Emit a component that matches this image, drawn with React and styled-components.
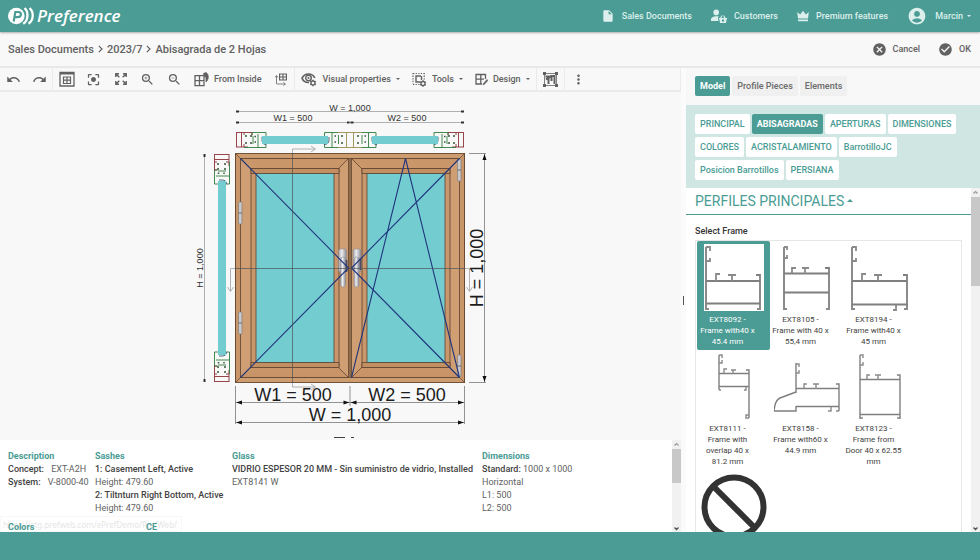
import { useState } from 'react'
import styled, { createGlobalStyle } from 'styled-components'
import {
  MdUndo,
  MdRedo,
  MdCenterFocusStrong,
  MdZoomIn,
  MdZoomOut,
  MdInsertDriveFile,
  MdAccountCircle,
  MdCancel,
  MdCheckCircle,
  MdMoreVert,
} from 'react-icons/md'

const GlobalStyle = createGlobalStyle`
  * {
    box-sizing: border-box;
  }
  body {
    margin: 0;
    font-family: Roboto, 'Liberation Sans', sans-serif;
    font-size: 9px;
    color: #616161;
  }
  button {
    font: inherit;
    color: inherit;
    border: 0;
    background: none;
    padding: 0;
    cursor: pointer;
  }
  a {
    color: inherit;
    text-decoration: none;
  }
  svg {
    display: block;
    flex: none;
  }
`

/* icons */
const CustomersIcon = () => (
  <svg width='16' height='14' viewBox='0 0 16 14' fill='currentColor'>
    <circle cx='5.2' cy='3.4' r='2.8' />
    <path d='M0 12V10.4C0 8.3 2.8 7.2 5.5 7.2c.8 0 1.600.1 2.300.3L7 9.200 7.500 12z' />
    <path d='M8 9h1l1.600-2.700.9.500L10.300 9h3l-1.200-2.200.9-.5L14.600 9H16v1.200h-.4L15 14H9l-.6-3.800H8zM12 10.300a1.200 1.200 0 1 0 .01 0z' fillRule='evenodd' />
  </svg>
)

const CrownIcon = () => (
  <svg width='12' height='12' viewBox='0 0 12 12' fill='currentColor'>
    <path d='M1 8.500.2 2l3 2.500L6 .8l2.800 3.700 3-2.500L11 8.500zM1 9.600h10v1.600H1z' />
  </svg>
)

const Chevron = () => (
  <svg width='5' height='8' viewBox='0 0 5 8' fill='none' stroke='currentColor' strokeWidth='1.200' aria-hidden='true'>
    <path d='m.8.8 3.200 3.200L.8 7.200' />
  </svg>
)

const WindowIcon = () => (
  <svg width='16' height='16' viewBox='0 0 16 16' fill='none' stroke='currentColor'>
    <path d='M1 1.500h14v13.500H1z' strokeWidth='1.300' />
    <path d='M1 2.500h14' strokeWidth='2' />
    <path d='M4.500 6h7v6.500h-7zM8 6v6.500M4.500 9.200h7' strokeWidth='1.200' />
  </svg>
)

const ExpandIcon = () => (
  <svg width='12' height='12' viewBox='0 0 12 12' fill='none' stroke='currentColor' strokeWidth='1.400'>
    <path d='M.8 4V.8H4M8 .8h3.200V4M11.200 8v3.200H8M4 11.200H.8V8M1 1l3.300 3.300M11 1 7.700 4.300M11 11 7.700 7.700M1 11l3.300-3.300' />
  </svg>
)

const InsideIcon = () => (
  <svg width='15' height='15' viewBox='0 0 15 15' fill='none' stroke='currentColor' strokeWidth='1.300'>
    <path d='M9.500 3.700H1v10h9v-4M5.500 3.700v10M1 8.700h9' />
    <path d='M9.500 1.500 12 .6c3 1.500 3 7 0 9.400V5.500L9.800 3.800z' fill='currentColor' strokeWidth='.8' />
    <path d='M10 3.500v6' />
  </svg>
)

const AxisIcon = () => (
  <svg width='12' height='13' viewBox='0 0 12 13' fill='none' stroke='currentColor'>
    <path d='M4.600 1h6.800v6H4.600zM8 1v6M4.600 4h6.800' strokeWidth='1.200' />
    <path d='M1.500 11V3M0 4.500 1.500 2.500 3 4.500M2 11h8M8.500 9.500l2 1.500-2 1.500' strokeWidth='.8' />
  </svg>
)

const Gear = ({ x, y }) => (
  <g transform={`translate(${x} ${y})`}>
    <circle r='2' fill='none' stroke='currentColor' strokeWidth='1.300' />
    <path
      d='M0-3.200V-2M0 2v1.200M-2.800-1.600l1 .6M1.800 1l1 .6M-2.800 1.600l1-.6M1.800-1l1-.6'
      stroke='currentColor'
      strokeWidth='1.300'
    />
  </g>
)

const EyeGearIcon = () => (
  <svg width='16' height='15' viewBox='0 0 16 15' fill='none' stroke='currentColor'>
    <path d='M8 10.500C4.500 10.700 2 8.800 1 6.300 2.200 3.500 4.500 2 7.500 2s5.200 1.500 6.300 4' strokeWidth='1.700' />
    <circle cx='7.500' cy='6' r='2.800' strokeWidth='1.400' />
    <circle cx='7.500' cy='6' r='1' fill='currentColor' stroke='none' />
    <Gear x={12} y={11} />
  </svg>
)

const ToolsIcon = () => (
  <svg width='15' height='15' viewBox='0 0 15 15' fill='none' stroke='currentColor'>
    <path d='M1 1.500h11M1 1v11M1 12.500h7M12.200 1v7' strokeWidth='1.200' strokeDasharray='1.300 1.300' />
    <path d='M9 4H4v6h4.500M9.500 4v4' strokeWidth='1.400' />
    <Gear x={11} y={11.500} />
  </svg>
)

const DesignIcon = () => (
  <svg width='13' height='13' viewBox='0 0 13 13' fill='none' stroke='currentColor' strokeWidth='1.300'>
    <path d='M7 11H1V1.500h9.500V6M5.800 1.500V11M1 6.200h8' />
    <path d='m8 12 .4-1.600 3.600-4 1 1-3.700 4z' fill='currentColor' strokeWidth='.5' />
  </svg>
)

const SelectIcon = () => (
  <svg width='15' height='15' viewBox='0 0 15 15' fill='none' stroke='currentColor'>
    <path d='M1.500 1.500h12v12h-12z' strokeWidth='.8' />
    <path d='M0 0h3v3H0zM12 0h3v3h-3zM0 12h3v3H0zM12 12h3v3h-3z' fill='currentColor' stroke='none' />
    <path d='M2.500 4.500h3v3M3 7.500l3-2.500M5.500 12V6.500M5.500 6l2.500-2h3.500v8M8.500 5v4' strokeWidth='2' />
  </svg>
)

const Logo = () => (
  <LogoLink href='#home' aria-label='Preference'>
    <svg width='27' height='18' viewBox='0 0 27 18'>
      <circle cx='8.300' cy='9' r='8.300' fill='#fff' />
      <path
        d='M5.700 14.500 7.300 5h3.200c3.600 0 3 5.200-.8 5.200H7.500'
        fill='none'
        stroke='#4a9c94'
        strokeWidth='2.200'
      />
      <path d='M16.500 1.200c4.200 3.200 4 12.400-1.300 15.600M21.500 1.200c4.600 3.600 4.300 12-1 15.600' fill='none' stroke='#fff' strokeWidth='2.300' />
    </svg>
    <span>Preference</span>
  </LogoLink>
)

/* the same corner section is reused on every side of the plan views */
const SectionEnd = ({ transform }) => (
  <g transform={transform} fill='none' strokeWidth='.9'>
    <path d='M0 .5h8M0 15h8M.5 1v14M5.500.5v14.500' stroke='#8b2f36' />
    <path d='M8 .5h8v3M8 15h4M8 1v2M8 12v3' stroke='#8b2f36' />
    <path d='M8 15.500h15M16 3V.5h14v4l-2 1M17 4v8M22 2v13.500M30 12v3.500h-8' stroke='#2f7d3c' />
    <path d='M26 5v3c0 3 1.500 4.500 4 4.500' stroke='#33566a' />
    <path d='M9 4h2M9 11h2M14 4h2M14 11h2M18.500 4.500H20M18.500 10H20' stroke='#35573a' strokeWidth='1.500' />
  </g>
)

const CentreSection = () => (
  <g transform='translate(324 132)' fill='none' strokeWidth='.9'>
    <path d='M14 .5h24M14 15.500h24M22.500.5v15M29.500.5v15' stroke='#9a8f4f' />
    <path d='M14 .5H.5V4l2 1M.5 12v3.500H14M14.500 3v9M8 .5v15M38 .5h14V4l-2 1M52 12v3.500H38M38 3v9M44.500.5v15' stroke='#2f7d3c' />
    <path d='M5 5v3c0 3-2 4.500-5 4.500M48 5v3c0 3 2 4.500 5 4.500' stroke='#33566a' />
    <path d='M10.500 4H12M10.500 10H12M40.500 4H42M40.500 10H42M17 4h2M17 11h2M33 4h2M33 11h2' stroke='#35573a' strokeWidth='1.500' />
  </g>
)

const Hinge = ({ x, y }) => (
  <g transform={`translate(${x} ${y})`}>
    <rect width='3.500' height='22' rx='1' fill='#c9c9cc' stroke='#77777c' strokeWidth='.6' />
    <path d='M0 11h3.500' stroke='#555' strokeWidth='.8' />
  </g>
)

const Sash = ({ x }) => (
  <g transform={`translate(${x} 0)`} stroke='#5e4330' strokeWidth='.8'>
    <rect x='0' y='158.500' width='108' height='219' fill='#cf9f73' />
    <path d='M0 158.500h108l-10 10H10zM0 377.500h108l-10-10H10z' fill='url(#woodH)' />
    <rect x='10.500' y='168.500' width='88' height='199' fill='#c9976b' />
    <path d='M10.500 168.500h88v5h-88zM10.500 362.500h88v5h-88z' fill='#c28f62' />
    <rect x='15.500' y='173.500' width='78' height='189' fill='#73cdd0' />
  </g>
)

const WindowDrawing = () => (
  <Canvas viewBox='0 92 681 348' preserveAspectRatio='xMidYMin slice' role='img' aria-label='Window with two sashes'>
    <defs>
      <linearGradient id='woodH' x1='0' y1='0' x2='0' y2='1'>
        <stop offset='0' stopColor='#c99669' />
        <stop offset='.6' stopColor='#d4a679' />
        <stop offset='1' stopColor='#c89467' />
      </linearGradient>
      <linearGradient id='handle' x1='0' x2='1'>
        <stop offset='0' stopColor='#a0a0a8' />
        <stop offset='.4' stopColor='#eeeef0' />
        <stop offset='1' stopColor='#8c8c96' />
      </linearGradient>
    </defs>

    {/* small dimensions */}
    <g stroke='#b0b0b0' strokeWidth='1'>
      <path d='M236 111.500h228M236 122.500h228M204.500 154v228' />
    </g>
    <g fill='#333'>
      <path d='M236 110.500h3v2h-3zM461 110.500h3v2h-3zM236 121.500h3v2h-3zM461 121.500h3v2h-3zM347 121.500h2.500v2H347zM350.500 121.500h3v2h-3zM203.500 154h2v3h-2zM203.500 379h2v3h-2z' />
    </g>
    <g fontFamily='Liberation Sans, sans-serif' fontSize='9' fill='#333' textAnchor='middle'>
      <text x='350' y='111'>W = 1,000</text>
      <text x='293' y='121'>W1 = 500</text>
      <text x='407' y='121'>W2 = 500</text>
      <text transform='translate(203 268) rotate(-90)'>H = 1,000</text>
    </g>

    {/* horizontal and vertical sections */}
    <SectionEnd transform='translate(236 132)' />
    <SectionEnd transform='translate(464 132) scale(-1 1)' />
    <CentreSection />
    <SectionEnd transform='matrix(0 1 1 0 214 154)' />
    <SectionEnd transform='matrix(0 -1 1 0 214 382)' />
    <path d='M262 136h66v8h-66zM372 136h66v8h-66zM218 181h8v174h-8z' fill='#73cdd0' />

    {/* window */}
    <rect x='235.500' y='153.500' width='229' height='229' fill='#c89668' stroke='#6b4a33' />
    <path d='M235.500 153.500h229l-5 5h-219zM235.500 382.500h229l-5-5h-219z' fill='#cd9c6f' stroke='#5e4330' strokeWidth='.7' />
    <Sash x={240.500} />
    <Sash x={351.500} />
    <path d='M350 158.500v219' stroke='#5e4330' />
    <Hinge x={238.500} y={202} />
    <Hinge x={238.500} y={312} />
    <Hinge x={457.500} y={159} />
    <Hinge x={457.500} y={355} />
    <g stroke='#85858d' strokeWidth='.5'>
      <rect x='338.500' y='249' width='8' height='23' rx='2' fill='url(#handle)' />
      <rect x='340.500' y='257' width='5' height='30' rx='2.500' fill='url(#handle)' />
      <rect x='353' y='249' width='8' height='23' rx='2' fill='url(#handle)' />
      <rect x='354' y='257' width='5' height='30' rx='2.500' fill='url(#handle)' />
      <path d='M346.500 260v12M360.500 258v12' stroke='#4b4b62' strokeWidth='1.800' />
    </g>
    <path
      d='M240.500 158.500 348.500 268l-108 109.500M459.500 158.500 351.500 268l108 109.500M405.500 158.500l-54 219M405.500 158.500l54 219'
      fill='none'
      stroke='#21357d'
      strokeWidth='1.100'
    />
    <g fill='none' stroke='#4c5357' strokeWidth='.7'>
      <path d='M292.500 153v230M235 268.500h230' />
    </g>
    <g fill='none' stroke='#a9a9a9' strokeWidth='.9'>
      <path d='M292.500 153v-4H315m-4-3 4.500 3-4.500 3M292.500 383v4H315m-4-3 4.500 3-4.500 3M235 268.500h-4.500V291m-3-4 3 4.500 3-4.500M465 268.500h4.500V291m-3-4 3 4.500 3-4.500' />
    </g>

    {/* large dimensions */}
    <g stroke='#777' strokeWidth='.8'>
      <path d='M235.500 386v38M464.500 386v38M350 386v20M469 153.500h17M469 382.500h17M236 402.500h228M236 422.500h228M484.500 154v228' />
    </g>
    <path
      d='M236 402.500l6-2v4zM349.500 402.500l-6-2v4zM350.500 402.500l6-2v4zM464 402.500l-6-2v4zM236 422.500l6-2v4zM464 422.500l-6-2v4zM484.500 154l-2 6h4zM484.500 382l-2-6h4z'
      fill='#111'
    />
    <g fontFamily='Liberation Sans, sans-serif' fontSize='18' fill='#1c1c1c' textAnchor='middle'>
      <text x='293' y='401'>W1 = 500</text>
      <text x='407' y='401'>W2 = 500</text>
      <text x='350' y='421'>W = 1,000</text>
      <text transform='translate(483 268) rotate(-90)'>H = 1,000</text>
    </g>
    <path d='M334 437.500h11M351 437.500h3' stroke='#444' />
  </Canvas>
)

/* profile pictures, all on a 66 x 67 grid */
const profiles = [
  {
    code: 'EXT8092',
    text: 'Frame with40 x 45.4 mm',
    boxed: true,
    main: 'M5 66V3M5 37h54M59 66V31h-4M5 59.500h54',
    hooks: 'M5 3h4v4M5 17h4v-3M15 37v-7h4M27 31h8M31 31v6M5 65h3M59 65h-3',
  },
  {
    code: 'EXT8105',
    text: 'Frame with 40 x 55,4 mm',
    main: 'M10 66V3M10 29.500h45M55 66V24h-4M10 48.500h45',
    hooks: 'M10 3h3v3M10 14h3v-3M18 29v-5h4M28 24h7M31 24v6M10 65h3M55 65h-3',
  },
  {
    code: 'EXT8194',
    text: 'Frame with40 x 45 mm',
    main: 'M5 66V3M5 37h55M60 66V31h-4M5 60.500h55',
    hooks: 'M5 3h4v4M5 17h4v-3M15 37v-7h4M27 31h8M31 31v6M5 65h3M60 65h-3M49 61v5h-3',
  },
  {
    code: 'EXT8111',
    text: 'Frame with overlap 40 x 81.2 mm',
    thin: true,
    main: 'M18 37V2M18 20.500h30M48 65V17h-3M18 33.500h30',
    hooks: 'M18 2h3v3M18 10h3V7M23 20v-4h3M30 17h5M32 17v4M18 37h2M45 34v3h-2M48 65h-3v-3h3',
  },
  {
    code: 'EXT8158',
    text: 'Frame with60 x 44.9 mm',
    thin: true,
    main: 'M22 40V10M22 35.500h43M65 58V31h-3M22 53.500h43M22 39 6 45Q1 47 0 58h22v-5',
    hooks: 'M22 11h3v3M22 20h3v-3M30 35v-4h3M39 31h6M42 31v5M65 58h-3M57 54v4h-3',
  },
  {
    code: 'EXT8123',
    text: 'Frame from Door 40 x 62.55 mm',
    thin: true,
    main: 'M13 66V2M13 26.500h40M53 66V22h-3M13 61.500h40',
    hooks: 'M13 2h3v3M13 12h3V9M20 26v-4h3M28 22h6M31 22v5M13 65h3M53 65h-3',
  },
]

const ProfilePicture = ({ profile }) => (
  <svg width='66' height='67' viewBox='0 0 66 67' fill='none' strokeWidth={profile.thin ? 1.4 : 1.8}>
    {profile.boxed && <path d='M3 0h60v67H3z' fill='#fff' />}
    <path d={profile.main} stroke='#7f7f7f' />
    <path d={profile.hooks} stroke='#8a8a8a' />
  </svg>
)

const ScrollBar = ({ thumb }) => (
  <Track aria-hidden='true'>
    <svg width='9' height='9' viewBox='0 0 9 9' fill='none' stroke='#9a9a9a' strokeWidth='1.200'>
      <path d='m2.500 5.500 2-2 2 2' />
    </svg>
    <Thumb $size={thumb} />
    <svg width='9' height='7' viewBox='0 0 9 7' fill='none' stroke='#555' strokeWidth='1.400'>
      <path d='m2.500 2.500 2 2 2-2' />
    </svg>
  </Track>
)

const groups = [
  'PRINCIPAL',
  'ABISAGRADAS',
  'APERTURAS',
  'DIMENSIONES',
  'COLORES',
  'ACRISTALAMIENTO',
  'BarrotilloJC',
  'Posicion Barrotillos',
  'PERSIANA',
]

const tabs = ['Model', 'Profile Pieces', 'Elements']

const App = () => {
  const [tab, setTab] = useState('Model')
  const [group, setGroup] = useState('ABISAGRADAS')
  const [frame, setFrame] = useState('EXT8092')

  return (
    <Page>
      <GlobalStyle />
      <Header>
        <Logo />
        <MainNav>
          <NavLink href='#sales'>
            <MdInsertDriveFile size={14} />
            Sales Documents
          </NavLink>
          <NavLink href='#customers'>
            <CustomersIcon />
            Customers
          </NavLink>
          <NavLink href='#premium'>
            <CrownIcon />
            Premium features
          </NavLink>
          <UserButton type='button'>
            <MdAccountCircle size={20} />
            <span>Marcin</span>
            <Caret />
          </UserButton>
        </MainNav>
      </Header>

      <TitleBar>
        <Breadcrumb aria-label='Breadcrumb'>
          <a href='#sales'>Sales Documents</a>
          <Chevron />
          <a href='#document'>2023/7</a>
          <Chevron />
          <span>Abisagrada de 2 Hojas</span>
        </Breadcrumb>
        <Actions>
          <ActionButton type='button'>
            <MdCancel size={15} />
            Cancel
          </ActionButton>
          <ActionButton type='button'>
            <MdCheckCircle size={15} />
            OK
          </ActionButton>
        </Actions>
      </TitleBar>

      <Main>
        <Workspace>
          <Toolbar>
            <HistoryButton type='button' aria-label='Undo'><MdUndo size={15} /></HistoryButton>
            <HistoryButton type='button' aria-label='Redo'><MdRedo size={15} /></HistoryButton>
            <Divider />
            <ToolButton type='button' aria-label='Window view'><WindowIcon /></ToolButton>
            <ToolButton type='button' aria-label='Center'><MdCenterFocusStrong size={15} /></ToolButton>
            <ToolButton type='button' aria-label='Fit'><ExpandIcon /></ToolButton>
            <ToolButton type='button' aria-label='Zoom in'><MdZoomIn size={15} /></ToolButton>
            <ToolButton type='button' aria-label='Zoom out'><MdZoomOut size={15} /></ToolButton>
            <TextButton type='button'>
              <InsideIcon />
              From Inside
            </TextButton>
            <ToolButton type='button' aria-label='Axes'><AxisIcon /></ToolButton>
            <Divider />
            <TextButton type='button'>
              <EyeGearIcon />
              Visual properties
              <Caret />
            </TextButton>
            <TextButton type='button'>
              <ToolsIcon />
              Tools
              <Caret />
            </TextButton>
            <TextButton type='button'>
              <DesignIcon />
              Design
              <Caret />
            </TextButton>
            <Divider />
            <ToolButton type='button' aria-label='Select'><SelectIcon /></ToolButton>
            <Divider />
            <ToolButton type='button' aria-label='More'><MdMoreVert size={15} /></ToolButton>
          </Toolbar>
          <WindowDrawing />
          <InfoPanel>
            <InfoBody>
              <InfoGrid>
                <div>
                  <InfoTitle>Description</InfoTitle>
                  <p><b>Concept:</b> <Value>EXT-A2H</Value></p>
                  <p><b>System:</b> <Value>V-8000-40</Value></p>
                </div>
                <div>
                  <InfoTitle>Sashes</InfoTitle>
                  <p><b>1: Casement Left, Active</b></p>
                  <p>Height: 479.60</p>
                  <p><b>2: Tiltnturn Right Bottom, Active</b></p>
                  <p>Height: 479.60</p>
                </div>
                <div>
                  <InfoTitle>Glass</InfoTitle>
                  <p><b>VIDRIO ESPESOR 20 MM - Sin suministro de vidrio, Installed</b></p>
                  <p>EXT8141 W</p>
                </div>
                <div>
                  <InfoTitle>Dimensions</InfoTitle>
                  <p><b>Standard:</b> 1000 x 1000</p>
                  <p>Horizontal</p>
                  <p>L1: 500</p>
                  <p>L2: 500</p>
                </div>
              </InfoGrid>
              <ExtraGrid>
                <InfoTitle>Colors</InfoTitle>
                <InfoTitle>CE</InfoTitle>
              </ExtraGrid>
            </InfoBody>
            <ScrollBar thumb='34px' />
            <LinkHint>https://stg.prefweb.com/ePrefDemo/PrefWeb/</LinkHint>
          </InfoPanel>
        </Workspace>

        <Splitter role='separator' aria-orientation='vertical' />

        <SidePanel>
          <Tabs role='tablist'>
            {tabs.map((name) => (
              <Tab key={name} type='button' role='tab' aria-selected={tab === name} $active={tab === name} onClick={() => setTab(name)}>
                {name}
              </Tab>
            ))}
          </Tabs>
          <Groups>
            {groups.map((name) => (
              <Chip key={name} type='button' aria-pressed={group === name} $active={group === name} onClick={() => setGroup(name)}>
                {name}
              </Chip>
            ))}
          </Groups>
          <SideScroll>
            <SideBody>
              <SectionTitle>
                <button type='button'>
                  PERFILES PRINCIPALES <CaretUp />
                </button>
              </SectionTitle>
              <FieldTitle id='frame-title'>Select Frame</FieldTitle>
              <FrameGrid role='group' aria-labelledby='frame-title'>
                {profiles.map((profile) => (
                  <FrameCard
                    key={profile.code}
                    type='button'
                    aria-pressed={frame === profile.code}
                    $active={frame === profile.code}
                    onClick={() => setFrame(profile.code)}
                  >
                    <ProfilePicture profile={profile} />
                    <span>{profile.code} - {profile.text}</span>
                  </FrameCard>
                ))}
                <FrameCard type='button' aria-label='No frame' onClick={() => setFrame('')}>
                  <svg width='66' height='67' viewBox='0 0 66 67' fill='none' stroke='#333' strokeWidth='6'>
                    <circle cx='33' cy='34' r='29.500' />
                    <path d='m12 13 42 42' />
                  </svg>
                </FrameCard>
              </FrameGrid>
            </SideBody>
            <ScrollBar thumb='89px' />
          </SideScroll>
        </SidePanel>
      </Main>
      <Footer />
    </Page>
  )
}

const Page = styled.div`
  height: 100vh;
  display: flex;
  flex-direction: column;
  overflow: hidden;
  background: #f8f8f8;
`

const Header = styled.header`
  flex: none;
  height: 32px;
  display: flex;
  align-items: center;
  justify-content: space-between;
  padding: 0 9px 0 8px;
  background: #4a9c94;
  color: #dcefec;
  box-shadow: 0 1px 2px rgba(0, 0, 0, 0.3);
  z-index: 1;
`

const LogoLink = styled.a`
  display: flex;
  align-items: center;
  gap: 2px;
  color: #fff;
  span {
    font-family: 'Open Sans', sans-serif;
    font-size: 17px;
    font-weight: 600;
    font-style: italic;
    line-height: 20px;
  }
`

const MainNav = styled.nav`
  display: flex;
  align-items: center;
  gap: 19px;
  font-weight: 500;
`

const NavLink = styled.a`
  display: flex;
  align-items: center;
  gap: 7px;
`

const UserButton = styled.button`
  display: flex;
  align-items: center;
  gap: 4px;
  span {
    margin-left: 4px;
  }
`

const Caret = styled.i`
  margin-top: 2px;
  border: 2px solid transparent;
  border-top-color: currentColor;
`

const CaretUp = styled.i`
  border: 3px solid transparent;
  border-top-width: 0;
  border-bottom-color: currentColor;
`

const TitleBar = styled.div`
  flex: none;
  height: 36px;
  display: flex;
  align-items: center;
  justify-content: space-between;
  padding: 0 9px 0 8px;
  border-bottom: 2px solid #e8e8e8;
`

const Breadcrumb = styled.nav`
  display: flex;
  align-items: center;
  gap: 4px;
  font-size: 11px;
  font-weight: 500;
`

const Actions = styled.div`
  display: flex;
  gap: 18px;
`

const ActionButton = styled.button`
  display: flex;
  align-items: center;
  gap: 6px;
  font-weight: 500;
`

const Main = styled.main`
  flex: 1;
  min-height: 0;
  display: flex;
`

const Workspace = styled.section`
  flex: 1;
  min-width: 0;
  display: flex;
  flex-direction: column;
`

const Toolbar = styled.div`
  flex: none;
  height: 24px;
  display: flex;
  border-bottom: 2px solid #ebebeb;
  border-right: 1px solid #ebebeb;
`

const ToolButton = styled.button`
  width: 27px;
  display: grid;
  place-items: center;
`

const HistoryButton = styled(ToolButton)`
  width: 26px;
`

const TextButton = styled.button`
  display: flex;
  align-items: center;
  gap: 5px;
  padding: 0 6px;
  font-weight: 500;
  white-space: nowrap;
`

const Divider = styled.span`
  width: 1px;
  background: #ebebeb;
`

const Canvas = styled.svg`
  flex: 1;
  min-height: 0;
  width: 100%;
`

const InfoPanel = styled.section`
  flex: none;
  height: 92px;
  display: flex;
  position: relative;
  background: #fff;
`

const InfoBody = styled.div`
  flex: 1;
  min-width: 0;
  overflow: hidden;
  padding: 10px 0 0 8px;
  line-height: 13px;
  white-space: nowrap;
  z-index: 1;
  p {
    margin: 0;
  }
  b {
    font-weight: 500;
    color: #424242;
  }
`

const InfoGrid = styled.div`
  display: grid;
  grid-template-columns: 87px 137px 250px 1fr;
`

const ExtraGrid = styled.div`
  display: grid;
  grid-template-columns: 138px 1fr;
  margin-top: 6px;
`

const InfoTitle = styled.h3`
  margin: 0;
  font-size: 9px;
  font-weight: 700;
  color: #4a9c94;
`

const Value = styled.span`
  margin-left: 5px;
`

const LinkHint = styled.span`
  position: absolute;
  left: 0;
  bottom: 0;
  width: 182px;
  height: 16px;
  padding-left: 2px;
  border: 1px solid #f8f8f8;
  font-family: 'Noto Sans', sans-serif;
  font-size: 8px;
  line-height: 16px;
  color: #e6e6e6;
`

const Track = styled.div`
  flex: none;
  width: 9px;
  display: flex;
  flex-direction: column;
  background: #f1f1f1;
  svg:last-child {
    margin-top: auto;
  }
`

const Thumb = styled.div`
  height: ${(props) => props.$size};
  background: #c8c8c8;
`

const Splitter = styled.div`
  flex: none;
  width: 5px;
  display: grid;
  place-items: center;
  background: #fbfbfb;
  cursor: col-resize;
  &::after {
    content: '';
    width: 1px;
    height: 9px;
    background: #555;
  }
`

const SidePanel = styled.aside`
  flex: none;
  width: 30%;
  display: flex;
  flex-direction: column;
`

const Tabs = styled.div`
  display: flex;
  gap: 2px;
  padding: 8px 9px 9px;
`

const Tab = styled.button`
  height: 20px;
  padding: 0 5px;
  border-radius: 2px;
  font-weight: ${(props) => (props.$active ? 700 : 500)};
  background: ${(props) => (props.$active ? '#4a9c94' : '#f0f0f0')};
  color: ${(props) => (props.$active ? '#fff' : '#6b6b6b')};
`

const Groups = styled.div`
  display: flex;
  flex-wrap: wrap;
  gap: 3px 2px;
  padding: 9px 9px 8px;
  background: #cfe6e2;
`

const Chip = styled(Tab)`
  background: ${(props) => (props.$active ? '#4a9c94' : '#fff')};
  color: ${(props) => (props.$active ? '#fff' : '#4a9c94')};
`

const SideScroll = styled.div`
  flex: 1;
  min-height: 0;
  display: flex;
  background: #fff;
`

const SideBody = styled.div`
  flex: 1;
  min-width: 0;
  overflow: hidden;
`

const SectionTitle = styled.h2`
  margin: 0;
  padding: 0 9px;
  height: 27px;
  border-bottom: 1px solid #4a9c94;
  font-size: 14px;
  font-weight: 400;
  color: #4a9c94;
  button {
    display: flex;
    align-items: center;
    gap: 3px;
    height: 25px;
  }
`

const FieldTitle = styled.h3`
  margin: 10px 9px 3px;
  font-size: 9px;
  font-weight: 500;
  line-height: 12px;
  color: #333;
`

const FrameGrid = styled.div`
  margin: 0 9px;
  padding: 0 1px;
  display: grid;
  grid-template-columns: repeat(auto-fill, 73px);
  border: 1px solid #e6e6e6;
`

const FrameCard = styled.button`
  display: flex;
  flex-direction: column;
  align-items: center;
  gap: 3px;
  padding: 3px 0;
  border-radius: 2px;
  font-size: 8px;
  line-height: 11px;
  background: ${(props) => (props.$active ? '#4a9c94' : 'transparent')};
  color: ${(props) => (props.$active ? '#fff' : '#424242')};
  span {
    padding: 0 13px 0 1px;
    text-align: center;
  }
`

const Footer = styled.footer`
  flex: none;
  height: 28px;
  background: #4a9c94;
`

export default App
